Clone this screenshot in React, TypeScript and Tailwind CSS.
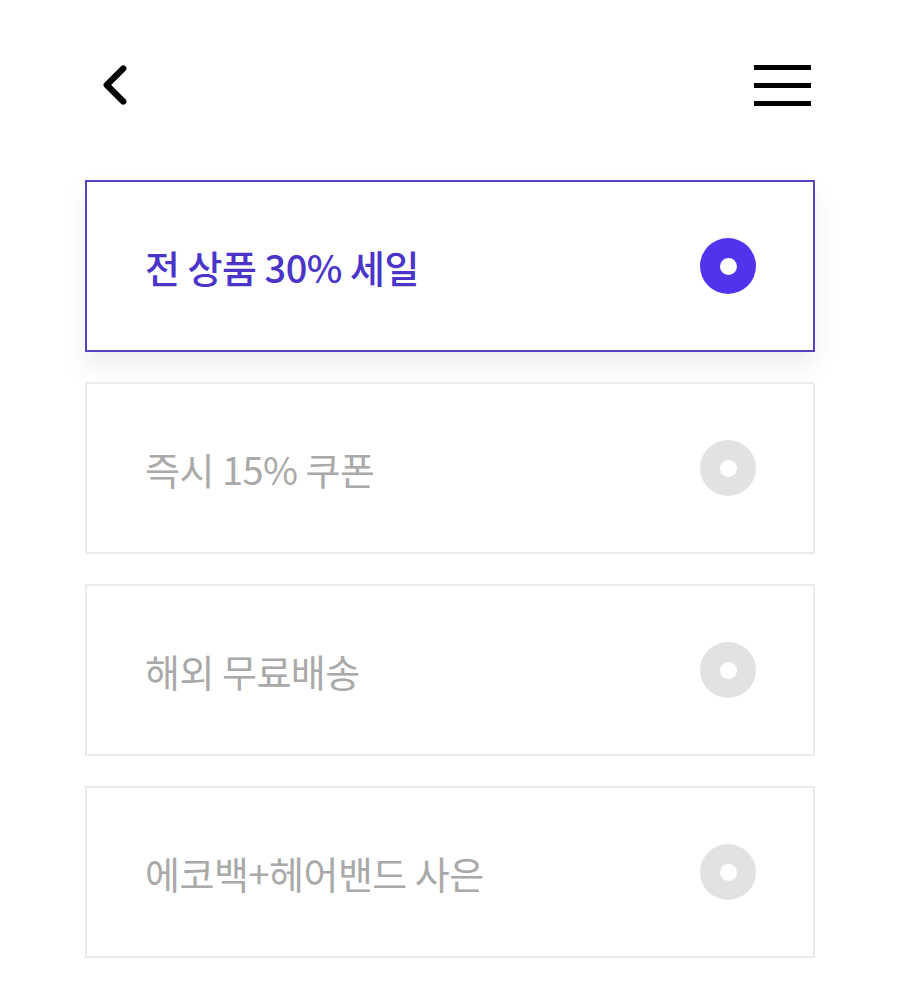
import { ChevronLeft } from 'lucide-react';

type Option = { id: string; label: string };

const options: Option[] = [
  { id: 'sale', label: '전 상품 30% 세일' },
  { id: 'coupon', label: '즉시 15% 쿠폰' },
  { id: 'shipping', label: '해외 무료배송' },
  { id: 'gift', label: '에코백+헤어밴드 사은' },
];

const Radio = ({ active }: { active: boolean }) => (
  <span
    className={`flex h-[56px] w-[56px] items-center justify-center rounded-full ${
      active ? 'bg-[#5133ee]' : 'bg-[#e2e2e2]'
    }`}
  >
    <span className="h-[17px] w-[17px] rounded-full bg-white" />
  </span>
);

export default function App() {
  const selected = 'sale';

  return (
    <div
      className="min-h-[1008px] w-[900px] bg-white"
      style={{ fontFamily: '"Noto Sans CJK KR", "Noto Sans", sans-serif' }}
    >
      <header className="flex items-center justify-between px-[95px] pt-[52px]">
        <ChevronLeft className="h-[66px] w-[66px] -ml-[13px] text-black" strokeWidth={2.3} />
        <div className="flex w-[57px] flex-col gap-[13px] -mr-[6px]">
          <span className="h-[5px] bg-black" />
          <span className="h-[5px] bg-black" />
          <span className="h-[5px] bg-black" />
        </div>
      </header>

      <ul className="mt-[62px] flex flex-col gap-[30px] px-[85px]">
        {options.map((item) => {
          const active = item.id === selected;
          return (
            <li
              key={item.id}
              className={`flex h-[172px] items-center justify-between border-2 bg-white pl-[58px] pr-[57px] ${
                active
                  ? 'border-[#5a40c0] shadow-[0_14px_24px_rgba(0,0,0,0.07)]'
                  : 'border-[#ececec]'
              }`}
            >
              <span
                className={`text-[38px] tracking-[-0.5px] ${
                  active ? 'font-medium text-[#4b35c9]' : 'text-[#a9a9a9]'
                }`}
              >
                {item.label}
              </span>
              <Radio active={active} />
            </li>
          );
        })}
      </ul>
    </div>
  );
}
